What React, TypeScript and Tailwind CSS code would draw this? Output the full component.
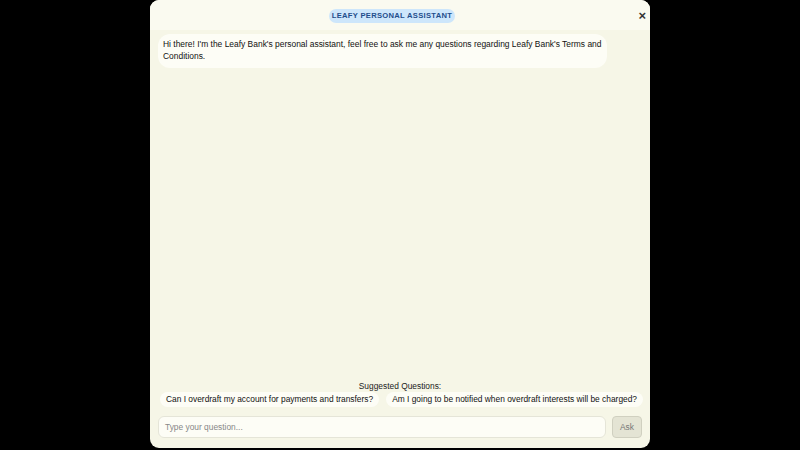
import React from "react";

export default function App() {
  return (
    <div
      className="w-[800px] h-[450px] bg-black flex justify-center"
      style={{ fontFamily: '"Liberation Sans", Arial, sans-serif' }}
    >
      <div className="w-[500px] h-[448px] bg-[#f6f6e7] rounded-[9px] flex flex-col overflow-hidden">
        <div className="relative h-[30px] bg-[#fafaf0] flex items-center justify-center shrink-0">
          <div className="bg-[#cde6fb] text-[#1f4e8c] font-bold text-[7.6px] leading-[14px] px-[3px] rounded-[7px] tracking-[0.3px] mt-[1px] mr-[16px]">
            LEAFY PERSONAL ASSISTANT
          </div>
          <div className="absolute right-[4px] top-[9px] text-[#333] font-bold text-[13px] leading-[14px]">
            ×
          </div>
        </div>
        <div className="flex-1 px-[8px] pt-[4px]">
          <div className="w-[449px] bg-[#fdfdf6] rounded-[12px] pl-[5px] pr-[3px] pt-[4px] pb-[6px] text-[8.45px] leading-[12px] text-[#111]">
            Hi there! I'm the Leafy Bank's personal assistant, feel free to ask me any questions regarding Leafy Bank's Terms and Conditions.
          </div>
        </div>
        <div className="flex flex-col items-center shrink-0">
          <div className="text-[8.4px] leading-[12px] text-[#222]">Suggested Questions:</div>
          <div className="flex gap-[7px] px-[10px] w-full whitespace-nowrap">
            <div className="bg-[#fdfdf6] rounded-[8px] px-[6px] text-[8.4px] leading-[15px] text-[#111]">
              Can I overdraft my account for payments and transfers?
            </div>
            <div className="bg-[#fdfdf6] rounded-[8px] px-[6px] text-[8.4px] leading-[15px] text-[#111]">
              Am I going to be notified when overdraft interests will be charged?
            </div>
          </div>
        </div>
        <div className="flex gap-[6px] px-[8px] pt-[9px] pb-[10px] shrink-0">
          <div className="flex-1 h-[22px] bg-[#fdfdf6] border border-[#e5e5d8] rounded-[6px] flex items-center px-[6px] text-[8.4px] text-[#888]">
            Type your question...
          </div>
          <div className="w-[30px] h-[22px] bg-[#e4e4d4] border border-[#d0d0c0] rounded-[4px] flex items-center justify-center text-[8.4px] text-[#777]">
            Ask
          </div>
        </div>
      </div>
    </div>
  );
}
